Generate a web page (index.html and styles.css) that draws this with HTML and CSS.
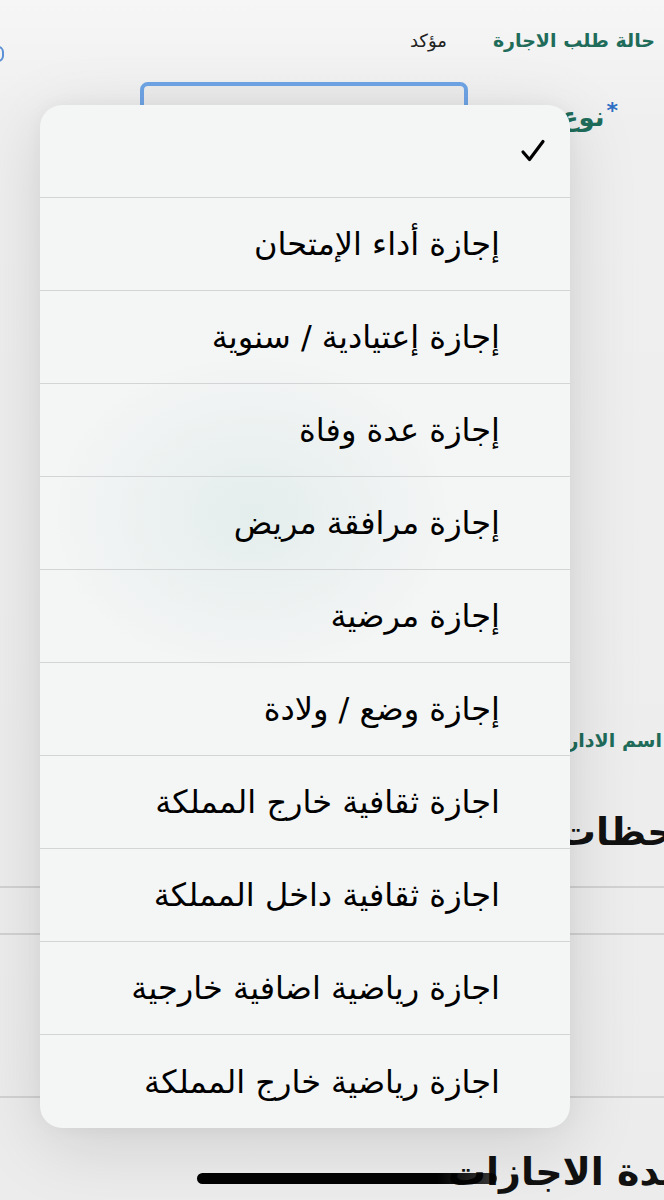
FILE: index.html
```html
<!DOCTYPE html>
<html lang="ar" dir="rtl">

<head>
    <meta charset="UTF-8">
    <meta name="viewport" content="width=device-width, initial-scale=1.0">
    <title>طلب اجازة</title>
    <link rel="stylesheet" href="styles.css">
</head>

<body>
    <div class="page">
        <span class="edge-dot"></span>

        <div class="status-row">
            <span class="status-label">حالة طلب الاجارة</span>
            <span class="status-value">مؤكد</span>
        </div>

        <div class="field-row">
            <label class="field-label" for="leave-type"><span class="req">*</span>نوع الإجازة</label>
            <div class="select-box" id="leave-type"></div>
        </div>

        <div class="admin-label">اسم الادارة</div>

        <h2 class="section-title notes-title">ملاحظات</h2>
        <div class="table-lines">
            <div class="t-row"></div>
            <div class="t-row tall"></div>
        </div>

        <h2 class="section-title periods-title">مدة الاجازات</h2>

        <!-- leave type picker, open -->
        <div class="menu">
            <div class="menu-item selected">
                <svg class="check" width="26" height="24" viewBox="0 0 26 24">
                    <path d="M3 13 L9.5 20.5 L23 2.5" fill="none" stroke="#000" stroke-width="3.2" stroke-linecap="round" stroke-linejoin="round" />
                </svg>
            </div>
            <div class="menu-item">إجازة أداء الإمتحان</div>
            <div class="menu-item">إجازة إعتيادية / سنوية</div>
            <div class="menu-item">إجازة عدة وفاة</div>
            <div class="menu-item">إجازة مرافقة مريض</div>
            <div class="menu-item">إجازة مرضية</div>
            <div class="menu-item">إجازة وضع / ولادة</div>
            <div class="menu-item">اجازة ثقافية خارج المملكة</div>
            <div class="menu-item">اجازة ثقافية داخل المملكة</div>
            <div class="menu-item">اجازة رياضية اضافية خارجية</div>
            <div class="menu-item">اجازة رياضية خارج المملكة</div>
        </div>

        <div class="home-bar"></div>
    </div>
</body>

</html>
```

FILE: styles.css
```css
html,
body {
    margin: 0;
    padding: 0;
}

body {
    font-family: "DejaVu Sans", sans-serif;
    background-color: #ededed;
    overflow: hidden;
}

.page {
    position: relative;
    height: 1200px;
    padding: 26px 9px 0 9px;
    box-sizing: border-box;
    background: linear-gradient(180deg, #f6f6f6 0%, #efefef 120px, #ececec 100%);
}

.edge-dot {
    position: absolute;
    left: -9px;
    top: 46px;
    width: 9px;
    height: 12px;
    border: 2px solid #5b8fd6;
    border-radius: 6px;
}

.status-row {
    display: flex;
    align-items: center;
    gap: 46px;
    height: 28px;
}

.status-label {
    color: #1f6c5a;
    font-size: 19px;
    font-weight: bold;
}

.status-value {
    color: #222;
    font-size: 18px;
}

.field-row {
    display: flex;
    align-items: flex-start;
    margin-top: 28px;
    margin-right: 37px;
}

.field-label {
    width: 150px;
    padding-top: 16px;
    color: #1f6c5a;
    font-size: 26px;
    font-weight: bold;
    white-space: nowrap;
    overflow: hidden;
}

.req {
    color: #2c6fc4;
    font-size: 22px;
    vertical-align: 8px;
    margin-left: 2px;
}

.select-box {
    width: 328px;
    height: 50px;
    border: 4px solid #6ea4e6;
    border-radius: 8px;
    background-color: #ececec;
    box-sizing: border-box;
}

.admin-label {
    margin-top: 596px;
    margin-right: -7px;
    color: #1f6c5a;
    font-size: 19px;
    font-weight: bold;
    line-height: 24px;
    white-space: nowrap;
}

.section-title {
    margin: 0;
    color: #111;
    font-size: 38px;
    font-weight: bold;
    white-space: nowrap;
}

.notes-title {
    margin-top: 56px;
    margin-right: -72px;
    line-height: 48px;
}

.table-lines {
    margin: 30px -9px 0 -9px;
    border-top: 2px solid #d2d2d2;
}

.t-row {
    height: 45px;
    border-bottom: 2px solid #d2d2d2;
}

.t-row.tall {
    height: 161px;
}

.periods-title {
    margin-top: 48px;
    margin-right: -30px;
    line-height: 52px;
}

/* popup list sits over the form */
.menu {
    position: absolute;
    left: 40px;
    top: 105px;
    width: 530px;
    border-radius: 22px;
    overflow: hidden;
    background:
        radial-gradient(ellipse 200px 160px at 40% 40%, rgba(214, 232, 229, 0.55), rgba(214, 232, 229, 0) 100%),
        #f4f5f5;
    box-shadow: 0 16px 70px rgba(0, 0, 0, 0.13), 0 0 18px rgba(0, 0, 0, 0.04);
}

.menu-item {
    display: flex;
    align-items: center;
    height: 93px;
    padding-right: 70px;
    box-sizing: border-box;
    border-bottom: 1px solid #d3d4d5;
    color: #000;
    font-size: 32px;
    white-space: nowrap;
}

.menu-item:last-child {
    border-bottom: none;
}

.menu-item.selected {
    padding-right: 24px;
}

.home-bar {
    position: absolute;
    left: 197px;
    top: 1173px;
    width: 300px;
    height: 11px;
    border-radius: 6px;
    background: linear-gradient(90deg, #000 0%, #000 80%, rgba(0, 0, 0, 0.75) 100%);
}
```
